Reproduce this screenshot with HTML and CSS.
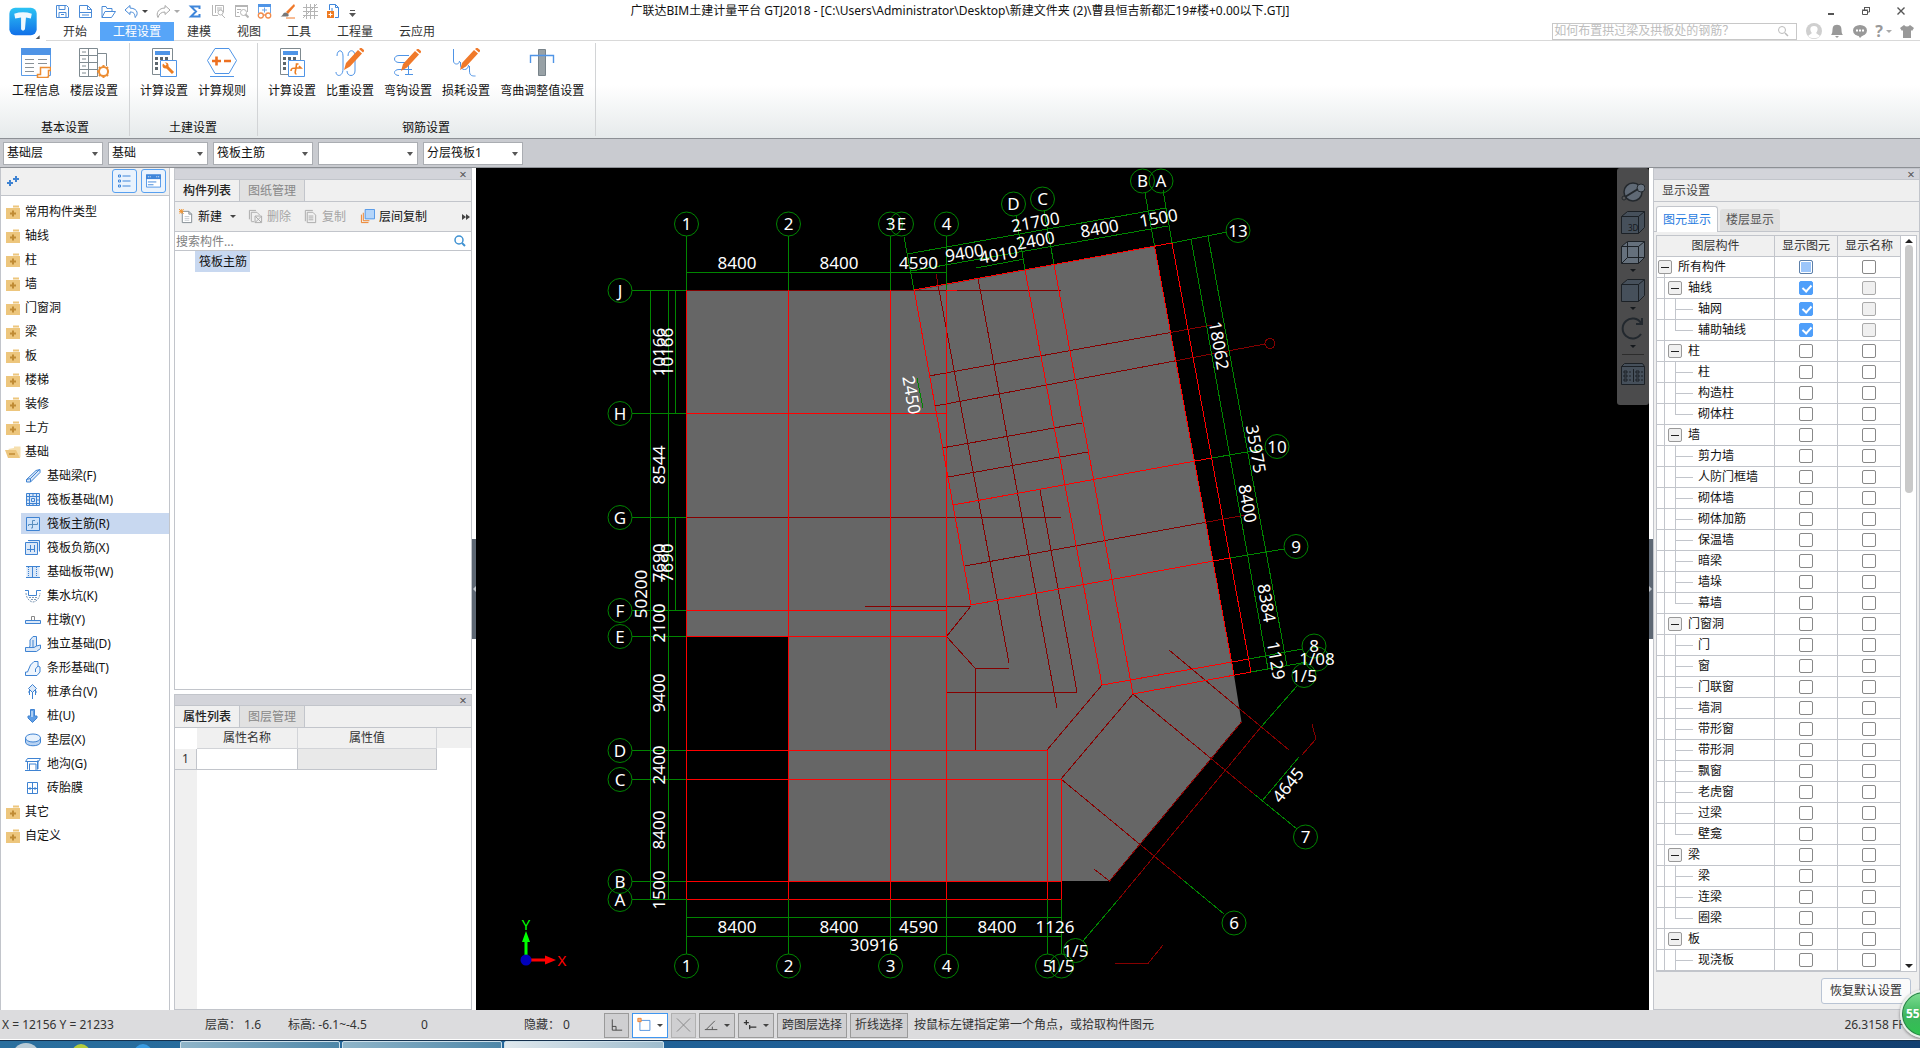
FILE: index.html
```html
<!DOCTYPE html>
<html lang="zh-CN">

<head>
    <meta charset="UTF-8">
    <title>广联达BIM土建计量平台 GTJ2018</title>
    <link rel="stylesheet" href="styles.css">
</head>

<body>

    <!-- icons -->
    <svg class="sprite" xmlns="http://www.w3.org/2000/svg">
        <symbol id="i-save" viewBox="0 0 15 15"><path d="M1.5 1.5h10l2 2v10h-12zM4 1.5v4h6v-4M4 13.500v-5h7v5M6 10.500h3" fill="none" stroke="#4a8bd8" /></symbol>
        <symbol id="i-doc" viewBox="0 0 15 15"><path d="M1.500 13.500v-12h8l4 4v8zM9.500 1.500v4h4M1 8.500h13M4 11h7" fill="none" stroke="#4a8bd8" /></symbol>
        <symbol id="i-open" viewBox="0 0 15 15"><path d="M1 13.500v-11h4l1 2h5v3M1 13.500l3-6h10.500l-4 6z" fill="none" stroke="#4a8bd8" /></symbol>
        <symbol id="i-undo" viewBox="0 0 15 15"><path d="M6 1.500L1 6l5 4.500V8c4 0 5 2 5 5.500 3-2 4-9-5-9.500z" fill="none" stroke="#4a8bd8" /></symbol>
        <symbol id="i-redo" viewBox="0 0 15 15"><path d="M9 1.500L14 6 9 10.500V8c-4 0-6 2-7 5.500C-.5 9 3 4 9 4z" fill="none" stroke="#a8a8a8" /></symbol>
        <symbol id="i-sum" viewBox="0 0 15 15"><path d="M11.500 5V2.500H3L8 7.500l-5 5h8.500V10" fill="none" stroke="#3f86da" stroke-width="2" /></symbol>
        <symbol id="i-steel" viewBox="0 0 15 15"><path d="M1.500 1v10.500H7M4.500 1v8M4.500 1.500h8v7M6 4h5M6 6h5" fill="none" stroke="#b5b5b5" /><circle cx="9.500" cy="8.500" r="2.500" fill="#fff" stroke="#b5b5b5" /><path d="M11 11l3 3" stroke="#b5b5b5" /></symbol>
        <symbol id="i-find" viewBox="0 0 15 15"><path d="M1 1h13v2H1z" fill="#b5b5b5" /><path d="M6 12.500H1.500V2h12v6M3 5.500h4M3 8.500h2" fill="none" stroke="#b5b5b5" /><circle cx="9.500" cy="8.500" r="3" fill="#fff" stroke="#b5b5b5" /><path d="M11.500 10.500l3 3" stroke="#b5b5b5" stroke-width="2" /></symbol>
        <symbol id="i-glass" viewBox="0 0 15 15"><path d="M1 0h13v3H1z" fill="#4f94e6" /><path d="M1.500 3v6M13.500 3v6M5 6h5M7.500 3.500v5" fill="none" stroke="#6ba4e8" /><g fill="none" stroke="#f08a4b" stroke-width="1.300"><circle cx="3.800" cy="11.500" r="2.500" /><circle cx="11.200" cy="11.500" r="2.500" /><path d="M6 11h3" /></g></symbol>
        <symbol id="i-brush" viewBox="0 0 15 15"><path d="M14 0L6 8l2 2 7-8z" fill="#f0792a" /><path d="M5.500 8.500c-3 0-2 3-5 4h7c2-.5 1-2 .5-3z" fill="#777" /><path d="M6 14h9" stroke="#f0792a" /></symbol>
        <symbol id="i-grid" viewBox="0 0 15 15"><path d="M3.500 0v15M7.500 0v15M11.500 0v15M0 3.500h15M0 7.500h15M0 11.500h15M0 14L14 0" fill="none" stroke="#b5b5b5" /></symbol>
        <symbol id="i-export" viewBox="0 0 15 15"><path d="M3.500 6V.5h6l3 3v10H9M9.500.5v3h3M6 4v3" fill="none" stroke="#3f86da" /><path d="M1 7h7v7H1z" fill="#ee7b22" /><path d="M4.500 8.500v4M2.500 10.500h4" stroke="#fff" /></symbol>

        <symbol id="i-info" viewBox="0 0 30 30"><path d="M.5.500h29v27H.5z" fill="#fff" stroke="#5b9ce8" /><path d="M0 0h30v7H0z" fill="#4f94e6" /><path d="M4 11.500h9M4 15.500h9M4 19.500h9M4 23.500h9M17 11.500h9M17 15.500h9" stroke="#8a9298" /><path d="M19.500 19.500h10v3h-2v6q-1 1.500-3 1h-8v-3h3z" fill="#fff" stroke="#ec8d33" stroke-width="1.500" /></symbol>
        <symbol id="i-floor" viewBox="0 0 30 30"><path d="M.5.500h18v28H.5zM.5 7.500h18M.5 14.500h18M.5 21.500h18M9.500.5v28M3 4h4M3 11h4M3 18h4M3 25h4M18.500 5.500h9V18" fill="none" stroke="#7f8a90" /><circle cx="24.500" cy="23.500" r="4.500" fill="#fff" stroke="#ec8d33" stroke-width="2" /><path d="M24.500 17v2M24.500 28v2M18 23.500h2M29 23.500h1M20 19l1.500 1.500M29 19l-1.500 1.500M20 28l1.500-1.500M29 28l-1.500-1.500" stroke="#ec8d33" stroke-width="2" /></symbol>
        <symbol id="i-calc" viewBox="0 0 30 30"><path d="M3.500.5h20v26h-20z" fill="#fff" stroke="#7f8a90" /><path d="M6 3h15v4H6z" fill="#4f94e6" /><path d="M6 9h3v3H6zM11 9h3v3h-3zM16 9h3v3h-3zM6 14h3v3H6zM6 19h3v3H6z" fill="#5c666d" /></symbol>
        <symbol id="i-calcwrench" viewBox="0 0 30 30"><use href="#i-calc" /><path d="M11.500 12.500h16v16h-16z" fill="#fff" stroke="#4f94e6" /><path d="M16 17l8 8" stroke="#ec7d22" stroke-width="3" /><circle cx="16.500" cy="17.500" r="3" fill="#ec7d22" /><path d="M14 14l3 3" stroke="#fff" stroke-width="2" /></symbol>
        <symbol id="i-calcbar" viewBox="0 0 30 30"><use href="#i-calc" /><path d="M11.500 12.500h16v16h-16z" fill="#fff" stroke="#4f94e6" /><path d="M14 23c0-3 2-3 5-3h5l-2-2M19.500 26c-3 0 0-5 0-10l2 0" fill="none" stroke="#ec7d22" stroke-width="1.600" /></symbol>
        <symbol id="i-rule" viewBox="0 0 30 30"><path d="M8 .5h14l7.500 12L22 25.500H8L.5 12.500zM3 28.500h24" fill="none" stroke="#4f94e6" /><path d="M5 13h9M9.500 8.500v9M17 13h7" stroke="#ec7021" stroke-width="2.600" /></symbol>
        <symbol id="i-pencil" viewBox="0 0 20 22"><path d="M0 22l2-7L14 2l4 3.500L6 18.500zM15 1l2-1.500 3.500 3L19 4.500z" fill="#f0792a" /></symbol>
        <symbol id="i-weight" viewBox="0 0 30 30"><path d="M2 8c0-7 6-7 6 0v13c0 8-7 8-7 3M13 8c0-7 7-7 7 0M12 23c0 6 8 6 8 0V12" fill="none" stroke="#4f94e6" /><use href="#i-pencil" x="9" y="0" width="20" height="22" /></symbol>
        <symbol id="i-hook" viewBox="0 0 30 30"><path d="M16 7.500H6c-6 0-6 7 0 7h6M14 21.500H6c-6 0-6 6 0 6M9 21.500h10M15.500 10v17M12 26.500h8" fill="none" stroke="#4f94e6" /><use href="#i-pencil" x="8" y="1" width="20" height="22" /></symbol>
        <symbol id="i-loss" viewBox="0 0 30 30"><path d="M2.500 1v12c0 4 6 4 6 0M9.500 14v3c0 6 8 6 8 0M18.500 18v5c0 5 3 5 6 5" fill="none" stroke="#4f94e6" /><use href="#i-pencil" x="9" y="0" width="20" height="22" /></symbol>
        <symbol id="i-bend" viewBox="0 0 30 30"><path d="M11.500 1.500h7v26h-7z" fill="#98a1a6" stroke="#78838a" /><path d="M3.500 15V7.500h23V15" fill="none" stroke="#4f94e6" stroke-width="1.400" /></symbol>

        <symbol id="i-folder" viewBox="0 0 16 16"><path d="M8 1.500h6v2H8zM1 4h14v11H1z" fill="#edc67d" /><path d="M5 9.500h6M8 6.500v6" stroke="#c08b35" stroke-width="2" /></symbol>
        <symbol id="i-folderopen" viewBox="0 0 16 16"><path d="M3 5l6-1V2.500h6.500v10L15 14z" fill="#f6dfae" /><path d="M0 6h11l4 8H3z" fill="#edc67d" /><path d="M4 10h6" stroke="#c08b35" stroke-width="1.500" /></symbol>
        <symbol id="i-f1" viewBox="0 0 16 16"><path d="M1.500 11.500L11 2.500l4-1v3L5.500 14h-4zM1.500 11.500l4-1v3.500M5.500 10.500L14 2" fill="#dbe8f8" stroke="#3f83d2" /></symbol>
        <symbol id="i-f2" viewBox="0 0 16 16"><path d="M1.500 1.500h13v12h-13zM1 4.500h14M1 11.500h14M4.500 1v13M11.500 1v13M6.500 6.500h3v3h-3zM8 1v3M8 12v2M1 8h3M12 8h3" fill="#dbe8f8" stroke="#3f83d2" /></symbol>
        <symbol id="i-f3" viewBox="0 0 16 16"><path d="M1.500 1.500h13v13h-13z" fill="#cfe3fa" stroke="#3f83d2" /><path d="M10 4.500H7.500V12H6M3.500 10V8.500h9V6.500" fill="none" stroke="#5a8fbe" /></symbol>
        <symbol id="i-f4" viewBox="0 0 16 16"><path d="M.5 2.500h12v12H.5zM3 .5h11.500v11" fill="#dbe8f8" stroke="#3f83d2" /><path d="M5.500 5v7M9.500 5v7M2 9.500h8" stroke="#3f83d2" /></symbol>
        <symbol id="i-f5" viewBox="0 0 16 16"><path d="M1.500 3h13v10h-13z" fill="#dbe8f8" /><path d="M1 2.500h14M1 13.500h14M7.500 3v10" stroke="#3f83d2" /><path d="M11.500 3v10M3.500 3v10" stroke="#3f83d2" stroke-dasharray="1 1" /></symbol>
        <symbol id="i-f6" viewBox="0 0 16 16"><path d="M0 2.500h3.500v5h8v-5H16" fill="none" stroke="#3f83d2" /><path d="M1 5c0 5 4 9 7 9s7-4 7-9M4 9.500h9M6 11.500h5" fill="none" stroke="#7d98b5" stroke-dasharray="2 1" /></symbol>
        <symbol id="i-f7" viewBox="0 0 16 16"><path d="M.5 8.500h15v3H.5z" fill="#dbe8f8" stroke="#3f83d2" /><path d="M6.500 8V4.500h3V8" fill="none" stroke="#888" /></symbol>
        <symbol id="i-f8" viewBox="0 0 16 16"><path d="M.5 15.500v-4h3l1.500-1V4l3-3.500h3.500V10l4-1v3.500l-4 3zM11.500 10L9 11.500H3.500M8 4v7" fill="#dbe8f8" stroke="#3f83d2" /></symbol>
        <symbol id="i-f9" viewBox="0 0 16 16"><path d="M.5 15.500v-3.500h2l3-7L9 1.500h4V6l2 1v5l-3 3.500zM13 6l-2.500 3v3" fill="#eef5fd" stroke="#3f83d2" /></symbol>
        <symbol id="i-f10" viewBox="0 0 16 16"><path d="M7.500.5l4 4-4 4-4-4z" fill="#dbe8f8" stroke="#3f83d2" /><path d="M7.500 8v7M4.500 6v5M10.500 6v5M3 8h2M10 8h2" stroke="#3f83d2" /></symbol>
        <symbol id="i-f11" viewBox="0 0 16 16"><path d="M5.500 1.500h4V8h2.500v2l-4.500 4.500L3 10V8h2.500z" fill="#5f9de4" stroke="#3f83d2" /><path d="M7 3v6" stroke="#fff" /></symbol>
        <symbol id="i-f12" viewBox="0 0 16 16"><path d="M.5 6v4c0 5 15 5 15 0V6" fill="#b9d3f2" stroke="#3f83d2" /><ellipse cx="8" cy="6" rx="7.500" ry="4" fill="#e8f2fd" stroke="#3f83d2" /></symbol>
        <symbol id="i-f13" viewBox="0 0 16 16"><path d="M.5 5.500l2-3h13l-2 3zM2.500 5.500v8M12.500 5.500v8M0 14.500h16M4.500 8v6M11 8v6M4 8h7M13 4v9" fill="none" stroke="#3f83d2" /></symbol>
        <symbol id="i-f14" viewBox="0 0 16 16"><path d="M2.500 2.500h10v11h-10zM7.500 2v12M2 8.500h11M5 7v3M10 7v3" fill="#fff" stroke="#3f83d2" /></symbol>
    </svg>

    <header class="top">
        <button class="logo" aria-label="菜单">
            <svg viewBox="0 0 40 42">
                <defs>
                    <linearGradient id="logo-bg" x2="0" y2="1">
                        <stop offset="0" stop-color="#2cc3f4" />
                        <stop offset="1" stop-color="#1170e8" />
                    </linearGradient>
                </defs>
                <rect x="5" y="8" width="28" height="28" rx="6" fill="url(#logo-bg)" />
                <path d="M10 14q9-3 18 0l-1 5-5-1-1 12q-2 3-4 0V18l-6 1z" fill="#eef8fe" />
                <path d="M36 36v4h-4z" fill="#555" />
            </svg>
        </button>
        <div class="quick">
            <button aria-label="保存"><svg><use href="#i-save" /></svg></button>
            <button aria-label="新建"><svg><use href="#i-doc" /></svg></button>
            <button aria-label="打开"><svg><use href="#i-open" /></svg></button>
            <button class="wide" aria-label="撤销"><svg><use href="#i-undo" /></svg><i class="caret"></i></button>
            <button class="wide" aria-label="恢复"><svg><use href="#i-redo" /></svg><i class="caret pale"></i></button>
            <button aria-label="汇总计算"><svg><use href="#i-sum" /></svg></button>
            <button aria-label="钢筋量"><svg><use href="#i-steel" /></svg></button>
            <button aria-label="查找"><svg><use href="#i-find" /></svg></button>
            <button aria-label="查看"><svg><use href="#i-glass" /></svg></button>
            <button aria-label="格式刷"><svg><use href="#i-brush" /></svg></button>
            <button aria-label="轴网"><svg><use href="#i-grid" /></svg></button>
            <button aria-label="导出"><svg><use href="#i-export" /></svg></button>
            <button aria-label="更多"><svg viewBox="0 0 15 15"><path d="M1 6.500h5" stroke="#555" /><path d="M0 9h7l-3.500 4z" fill="#555" /></svg></button>
        </div>
        <h1 class="title">广联达BIM土建计量平台 GTJ2018 - [C:\Users\Administrator\Desktop\新建文件夹 (2)\曹县恒吉新都汇19#楼+0.00以下.GTJ]</h1>
        <div class="window-buttons">
            <button aria-label="最小化"><svg viewBox="0 0 10 10"><path d="M2 8h6" stroke="#555" stroke-width="2" /></svg></button>
            <button aria-label="还原"><svg viewBox="0 0 10 10"><path d="M1.500 4.500h5v4h-5zM3.500 4V1.500h5v4.500H7M1 4h6M3 1.500h6" fill="none" stroke="#555" /></svg></button>
            <button aria-label="关闭"><svg viewBox="0 0 10 10"><path d="M1.500 1.500l7 7M8.500 1.500l-7 7" stroke="#555" stroke-width="1.400" /></svg></button>
        </div>
        <nav class="tabs">
            <button>开始</button>
            <button class="active">工程设置</button>
            <button>建模</button>
            <button>视图</button>
            <button>工具</button>
            <button>工程量</button>
            <button>云应用</button>
        </nav>
        <div class="tools">
            <label class="help-search">
                <input type="text" placeholder="如何布置拱过梁及拱板处的钢筋？" aria-label="帮助搜索">
                <svg viewBox="0 0 12 12"><circle cx="5" cy="5" r="3.500" fill="none" stroke="#bbb" /><path d="M8 8l3 3" stroke="#bbb" stroke-width="1.500" /></svg>
            </label>
            <button aria-label="用户"><svg viewBox="0 0 16 16"><circle cx="8" cy="8" r="8" fill="#cfcfcf" /><path d="M8 3c5 0 4 5 2 7l4 3c-3 3-9 3-12 0l4-3C4 8 3 3 8 3z" fill="#fff" /></svg></button>
            <button aria-label="通知"><svg viewBox="0 0 16 16"><path d="M2 12c2-2 1-5 2-8 1-3 7-3 8 0 1 3 0 6 2 8zM6 13h4l-2 2z" fill="#999" /></svg></button>
            <button aria-label="消息"><svg viewBox="0 0 16 16"><ellipse cx="8" cy="7.500" rx="7" ry="5.500" fill="#999" /><path d="M6 12l2 3 3-3z" fill="#999" /><path d="M4 7.500h2M7 7.500h2M10 7.500h2" stroke="#fff" stroke-width="2" /></svg></button>
            <button class="help" aria-label="帮助">?<i class="caret pale"></i></button>
            <button aria-label="皮肤"><svg viewBox="0 0 16 16"><path d="M5 2q3 3 6 0l4 3-2 3-1-1v8H4V7L3 8 1 5z" fill="#999" /></svg></button>
        </div>
    </header>

    <section class="ribbon">
        <div class="group">
            <div class="commands">
                <button><svg><use href="#i-info" /></svg>工程信息</button>
                <button><svg><use href="#i-floor" /></svg>楼层设置</button>
            </div>
            <h2>基本设置</h2>
        </div>
        <div class="group">
            <div class="commands">
                <button><svg><use href="#i-calcwrench" /></svg>计算设置</button>
                <button><svg><use href="#i-rule" /></svg>计算规则</button>
            </div>
            <h2>土建设置</h2>
        </div>
        <div class="group">
            <div class="commands">
                <button><svg><use href="#i-calcbar" /></svg>计算设置</button>
                <button><svg><use href="#i-weight" /></svg>比重设置</button>
                <button><svg><use href="#i-hook" /></svg>弯钩设置</button>
                <button><svg><use href="#i-loss" /></svg>损耗设置</button>
                <button><svg><use href="#i-bend" /></svg>弯曲调整值设置</button>
            </div>
            <h2>钢筋设置</h2>
        </div>
    </section>

    <section class="filters">
        <label><select aria-label="楼层"><option>基础层</option></select></label>
        <label><select aria-label="构件类型"><option>基础</option></select></label>
        <label><select aria-label="构件"><option>筏板主筋</option></select></label>
        <label><select aria-label="名称"><option></option></select></label>
        <label><select aria-label="分层"><option>分层筏板1</option></select></label>
    </section>

    <main>
        <aside class="categories">
            <div class="categories-head">
                <svg class="plus" viewBox="0 0 12 12"><path d="M0 8h6M3 5v6M6 4h6M9 1v6" stroke="#3f83d2" stroke-width="2" /></svg>
                <button aria-label="列表"><svg viewBox="0 0 14 14"><path d="M1 1h2v2H1zM1 6h2v2H1zM1 11h2v2H1zM5 2h8M5 7h8M5 12h8" fill="none" stroke="#3f86da" /></svg></button>
                <button aria-label="卡片"><svg viewBox="0 0 16 14"><path d="M.5.500h15v13H.5z" fill="#fff" stroke="#4f94e6" /><path d="M0 0h16v5H0z" fill="#3f86da" /><path d="M2 8h9M2 11h6" stroke="#3f86da" /><path d="M2 2.500h4M11 2.500h3" stroke="#fff" stroke-dasharray="1 1" /></svg></button>
            </div>
            <ul class="category-list"></ul>
        </aside>

        <div class="middle">
            <section class="panel components">
                <div class="panel-bar"><button aria-label="关闭">×</button></div>
                <div class="panel-tabs">
                    <button class="active">构件列表</button>
                    <button>图纸管理</button>
                </div>
                <div class="toolbar">
                    <button><svg viewBox="0 0 16 16"><path d="M3.500 2.500h7l3 3v9h-10zM10.500 2.500v3h3" fill="#fff" stroke="#808a90" /><path d="M6 8h5M6 10h5M6 12h5" stroke="#c5cbd0" /><path d="M0 0l5 5M5 0L0 5M2.500 0v5M0 2.500h5" stroke="#f0922e" /></svg>新建<i class="caret"></i></button>
                    <button class="off"><svg viewBox="0 0 16 16"><path d="M1.500 11V1.500h7M3.500 13V3.500h6l3 3M3.500 13.500h3" fill="none" stroke="#aaa" /><path d="M7.500 7.500h7v7h-7zM8 8l6 6M14 8l-6 6" fill="none" stroke="#aaa" /></svg>删除</button>
                    <button class="off"><svg viewBox="0 0 16 16"><path d="M2.500 13V1.500h8M4.500 3.500h6l3 3v8h-9zM6 7.500h5M6 9.500h5M6 11.500h5" fill="none" stroke="#aaa" /></svg>复制</button>
                    <button><svg viewBox="0 0 16 16"><path d="M1.500 6v8.500H9M3.500 4v8.500H10" fill="none" stroke="#ec7d22" /><path d="M5.500.500h10v10h-10z" fill="#b4d5fa" stroke="#4f94e6" /></svg>层间复制</button>
                    <button class="overflow" aria-label="更多"><svg viewBox="0 0 8 6"><path d="M0 0l4 3-4 3zM4 0l4 3-4 3z" fill="#444" /></svg></button>
                </div>
                <label class="search">
                    <input type="text" placeholder="搜索构件..." aria-label="搜索构件">
                    <svg viewBox="0 0 12 12"><circle cx="5" cy="5" r="4" fill="none" stroke="#3f92d2" stroke-width="1.500" /><path d="M8 8l3 3" stroke="#3f92d2" stroke-width="2" /></svg>
                </label>
                <ul class="component-list">
                    <li><button>筏板主筋</button></li>
                </ul>
            </section>

            <section class="panel properties">
                <div class="panel-bar"><button aria-label="关闭">×</button></div>
                <div class="panel-tabs">
                    <button class="active">属性列表</button>
                    <button>图层管理</button>
                </div>
                <div class="property-body">
                    <table>
                        <thead>
                            <tr><td class="corner"></td><th>属性名称</th><th>属性值</th></tr>
                        </thead>
                        <tbody>
                            <tr><th>1</th><td></td><td class="value"></td></tr>
                        </tbody>
                    </table>
                </div>
            </section>
        </div>

        <div class="splitter"><button aria-label="收起左侧"><svg viewBox="0 0 4 8"><path d="M4 1v6L1 4z" fill="#c3c8ce" /></svg></button></div>

        <section class="canvas">
            <svg class="drawing" viewBox="476 168 1173 842" preserveAspectRatio="xMidYMid meet">
                <path class="slab" d="M686.500 290.500H914L1154.500 246L1234 675L1241.500 722L1109.500 881H788.500V636.500H686.500Z" />

                <!-- auxiliary axes -->
                <path class="aux" d="M686 290.500H1061M686 517.500H1061M865 606.500H970M946 692.500H1077M975 668.500H1009M975.500 668V750M971 606L946.500 636.500L975 668
                    M929 376L1212 325M935 406L1265 344M942 448L1082 423M948 477L1088 452M965 566L1246 515
                    M936 274L1009 663M978 278L1057 708M1040 490L1077 692
                    M1047 750L1102 685M1061 779L1133 694L1254 794M1061 779L1183 880M1169 650L1289 750
                    M1241.500 722L1109.500 881L1094 869M1261 727L1118 900M1312 724L1316 739L1302 755M1115 963.500H1148L1163 945" />
                <circle class="aux" cx="1270" cy="343.500" r="5" />

                <!-- main axes -->
                <path class="axis" d="M686.500 290V899M788.500 290V899M890.500 290V899M946.500 290V899M1047.500 750V899M1061.500 779V899
                    M686 413.500H946M686 610.500H946M686 636.500H946M686 750.500H1047M686 779.500H1061M686 881.500H1061M686 899.500H1061M946 290.500H957
                    M914 289L971 605M1025 270L1102 685M1054 264L1133 694M1154.500 246L1234 675M1172 243L1251 672
                    M914 290L1172 243M953 505L1212 458M971 605L1230 558M1102 685L1249 659M1133 694L1251 672" />

                <!-- dimension lines and leaders -->
                <path class="dim" d="M686.500 236V290M788.500 236V290M890.500 236V290M946.500 236V290M686 272.500H946
                    M632 290.500H686M632 413.500H686M632 517.500H686M632 610.500H686M632 636.500H686M632 750.500H686M632 779.500H686M632 881.500H686M632 899.500H686
                    M650.500 290V899M668.500 290V899M675.500 290V413M675.500 517V610
                    M686.500 899V954M788.500 899V954M890.500 899V954M946.500 899V954M1047.500 899V954M1061.500 899V954M686 917.500H1062M686 936.500H1062
                    M904 237L914 290M1016 216L1025 270M1044 211L1054 264M1145 193L1154.500 246M1163 190L1172 243
                    M907 254L1166 208M911 271L1168 226M976 268L1024 259
                    M1172 243L1227 232M1212 458L1264 449M1230 558L1284 549M1249 659L1302 649M1251 672L1307 662
                    M1191 239L1268 669M1208 236L1287 666M917 378L923 408
                    M1297 686L1261 727M1118 900L1083 941M1254 794L1297 829M1183 880L1224 914M1299 757L1262 801" />
                <g class="bubbles"></g>
                <g class="labels"></g>

                <!-- coordinate arrows -->
                <path d="M524.500 960V942h-2.500l4-11 4 11h-2.500v18z" fill="#0f0" />
                <path d="M526 958.500h19v-3l11 4.500-11 4.500v-3h-19z" fill="#f00" />
                <circle cx="526" cy="960" r="5.500" fill="#00b" />
                <text class="axis-y" x="526" y="930">Y</text>
                <text class="axis-x" x="562" y="966">X</text>
            </svg>
            <div class="view-tools">
                <button aria-label="动态观察"><svg viewBox="0 0 24 24"><circle cx="12" cy="12" r="9" fill="#5f6975" stroke="#23282d" stroke-width="1.500" /><circle cx="20" cy="8" r="4" fill="#6b7682" stroke="#23282d" /><circle cx="3" cy="18" r="2" fill="#555" stroke="#23282d" /><path d="M4 17L17 9" stroke="#23282d" stroke-width="2" /></svg></button>
                <button aria-label="三维"><svg viewBox="0 0 24 24"><path d="M.5 6.500h17v17H.5zM.5 6.500l6-5h17v16l-6 6M17.500 6.500l6-5" fill="#46505b" stroke="#1c2126" /><text x="7" y="21">3D</text></svg></button>
                <button aria-label="俯视"><svg viewBox="0 0 24 24"><path d="M.5 6.500l6-5h17v16l-6 6H.5z" fill="#65707c" stroke="#1c2126" /><path d="M.5 6.500h17v17M17.500 6.500l6-5M6.500 2v15.500h17M.5 23.500l6-6" fill="none" stroke="#1c2126" /></svg><i class="caret"></i></button>
                <button aria-label="实体"><svg viewBox="0 0 24 24"><path d="M.5 6.500h17v17H.5zM.5 6.500l6-5h17v16l-6 6M17.500 6.500l6-5" fill="#46505b" stroke="#1c2126" /></svg><i class="caret"></i></button>
                <button aria-label="旋转"><svg viewBox="0 0 24 24"><path d="M20 18a10 10 0 1 1 0-11M15 8h6V2" fill="none" stroke="#22282e" stroke-width="2" /></svg><i class="caret"></i></button>
                <hr>
                <button aria-label="显示设置"><svg viewBox="0 0 24 24"><path d="M.5 5.500h23v18H.5zM.5 5.500l3-3h18l2 3" fill="#46505b" stroke="#1c2126" /><path d="M3 10h3v2H3zM3 14h3v2H3zM3 18h3v2H3zM15 10h3v2h-3zM15 14h3v2h-3zM15 18h3v2h-3zM8 11h2M8 15h2M8 19h2M20 11h2M20 15h2M20 19h2M12.500 8v13" fill="none" stroke="#1c2126" /></svg></button>
            </div>
        </section>

        <div class="splitter"><button aria-label="收起右侧"><svg viewBox="0 0 4 8"><path d="M0 1v6l3-3z" fill="#c3c8ce" /></svg></button></div>

        <aside class="panel display">
            <div class="panel-bar"><button aria-label="关闭">×</button></div>
            <h2>显示设置</h2>
            <div class="display-tabs">
                <button class="active">图元显示</button>
                <button>楼层显示</button>
            </div>
            <div class="layer-box">
                <table class="layers">
                    <thead>
                        <tr><th>图层构件</th><th class="check">显示图元</th><th class="check">显示名称</th></tr>
                    </thead>
                    <tbody></tbody>
                </table>
                <div class="scroll"><i class="up"></i><span></span><i class="down"></i></div>
            </div>
            <div class="display-foot"><button>恢复默认设置</button></div>
        </aside>
    </main>

    <footer class="status">
        <span class="coords">X = 12156 Y = 21233</span>
        <span class="height">层高： 1.6</span>
        <span class="level">标高: -6.1~-4.5</span>
        <span class="count">0</span>
        <span class="hidden-count">隐藏： 0</span>
        <div class="modes">
            <button aria-label="正交"><svg viewBox="0 0 16 16"><path d="M3.500 2v11.500H14M3.500 9.500h4v4" fill="none" stroke="#444" /></svg></button>
            <button class="on" aria-label="矩形"><svg viewBox="0 0 18 16"><path d="M3.500 2.500h12v12h-12z" fill="none" stroke="#3f86da" /><path d="M1 0h4v4H1z" fill="#f9b58c" stroke="#ec7d22" /></svg><i class="caret"></i></button>
            <button aria-label="交点"><svg viewBox="0 0 16 16"><path d="M1 1l14 14M15 1L1 15" stroke="#888" /></svg></button>
            <button aria-label="角度"><svg viewBox="0 0 18 16"><path d="M1 13.500h15M3 13L13 3M10 10v3" fill="none" stroke="#444" /></svg><i class="caret"></i></button>
            <button aria-label="偏移"><svg viewBox="0 0 18 16"><path d="M1 5h6M4 2v6M8 10.500h8M8 8v5" fill="none" stroke="#333" stroke-width="1.500" /></svg><i class="caret"></i></button>
            <button>跨图层选择</button>
            <button>折线选择</button>
        </div>
        <span class="hint">按鼠标左键指定第一个角点，或拾取构件图元</span>
        <span class="fps">26.3158 FPS</span>
        <div class="ball">55</div>
    </footer>

    <div class="taskbar">
        <span class="orb"></span>
        <span class="pin green"></span>
        <span class="pin blue"></span>
        <span class="task"></span>
        <span class="task"></span>
        <span class="task light"></span>
    </div>

    <script src="script.js"></script>
</body>

</html>
```

FILE: styles.css
```css
* {
    box-sizing: border-box;
}

body {
    margin: 0;
    height: 100vh;
    display: flex;
    flex-direction: column;
    overflow: hidden;
    background: #fff;
    color: #111;
    font: 12px/16px "Noto Sans", "Noto Sans CJK SC", sans-serif;
}

button,
input,
select {
    font: inherit;
    color: inherit;
}

button {
    border: 0;
    padding: 0;
    background: none;
}

h1,
h2 {
    margin: 0;
    font-size: 12px;
    font-weight: normal;
}

ul {
    list-style: none;
    margin: 0;
    padding: 0;
}

.sprite {
    display: none;
}

.caret {
    display: inline-block;
    border: 3px solid transparent;
    border-top-color: #444;
    border-bottom: 0;
}

.caret.pale {
    border-top-color: #aaa;
}

/* title, quick access and tabs */
.top {
    display: grid;
    grid-template-columns: 46px 1fr auto 1fr 46px;
    grid-template-rows: 22px 19px;
    grid-template-areas:
        "logo quick title win win"
        "logo tabs tools tools tools";
}

.logo {
    grid-area: logo;
}

.logo svg {
    display: block;
    width: 40px;
    height: 41px;
    margin-left: 4px;
}

.quick {
    grid-area: quick;
    display: flex;
    align-items: center;
    gap: 8px;
    padding-left: 9px;
}

.quick button {
    display: flex;
    align-items: center;
    justify-content: space-between;
    width: 15px;
}

.quick svg {
    width: 15px;
    height: 15px;
    flex: none;
}

.quick .wide {
    width: 24px;
}

.title {
    grid-area: title;
    line-height: 22px;
    white-space: nowrap;
}

.window-buttons {
    grid-area: win;
    display: flex;
    justify-content: flex-end;
    align-items: center;
    gap: 25px;
    padding-right: 14px;
}

.window-buttons svg {
    display: block;
    width: 10px;
    height: 10px;
}

.tabs {
    grid-area: tabs;
    display: flex;
    padding-left: 4px;
    border-bottom: 1px solid #d9d9d9;
}

.tabs button {
    padding: 0 13px;
    height: 19px;
    color: #333;
    white-space: nowrap;
}

.tabs .active {
    background: #57a5f8;
    color: #fff;
}

.tools {
    grid-area: tools;
    display: flex;
    justify-content: flex-end;
    align-items: center;
    gap: 7px;
    padding-right: 5px;
    border-bottom: 1px solid #d9d9d9;
}

.tools button svg {
    display: block;
    width: 16px;
    height: 16px;
}

.tools .help {
    display: flex;
    align-items: center;
    gap: 3px;
    color: #999;
    font-size: 16px;
    font-weight: bold;
}

.help-search {
    display: flex;
    align-items: center;
    width: 245px;
    height: 17px;
    margin-right: 2px;
    padding-right: 7px;
    border: 1px solid #c8c8c8;
}

.help-search input {
    flex: 1;
    border: 0;
    padding: 0 1px;
    height: 15px;
    min-width: 0;
    background: none;
}

.help-search input::placeholder {
    color: #bdbdbd;
}

.help-search svg {
    width: 12px;
    height: 12px;
}

/* ribbon */
.ribbon {
    display: flex;
    height: 98px;
    padding: 2px;
    border-bottom: 1px solid #8d9095;
    background: linear-gradient(#fff 45%, #e6eaeb);
}

.group {
    display: flex;
    flex-direction: column;
    padding: 5px 6px 0 5px;
    border-right: 1px solid #d2d4d6;
}

.group h2 {
    margin-top: auto;
    text-align: center;
}

.commands {
    display: flex;
}

.commands button {
    display: flex;
    flex-direction: column;
    align-items: center;
    gap: 5px;
    padding: 0 5px;
}

.commands svg {
    width: 30px;
    height: 30px;
}

.filters {
    display: flex;
    align-items: center;
    gap: 5px;
    height: 29px;
    padding: 0 3px;
    border-bottom: 1px solid #8d9095;
    background: #c9cbd0;
}

.filters label {
    position: relative;
}

.filters label::after {
    content: "";
    position: absolute;
    top: 10px;
    right: 5px;
    border: 3px solid transparent;
    border-top: 4px solid #555;
    border-bottom: 0;
}

.filters select {
    display: block;
    width: 100px;
    height: 23px;
    padding: 0 3px;
    appearance: none;
    border: 1px solid #aaadb2;
    border-radius: 0;
    background: #fff;
}

/* work area */
main {
    flex: 1;
    min-height: 0;
    display: grid;
    grid-template-columns: 170px 302px 4px minmax(0, 1fr) 4px 267px;
    grid-template-rows: minmax(0, 1fr);
    background: #fff;
}

.categories {
    border: solid #c2c5cb;
    border-width: 0 1px;
}

.categories-head {
    display: flex;
    align-items: center;
    gap: 4px;
    height: 28px;
    padding: 0 3px 2px 6px;
    background: #f0f0f0;
    border-bottom: 1px solid #c2c5cb;
}

.categories-head .plus {
    width: 12px;
    height: 12px;
    margin-right: auto;
}

.categories-head button {
    display: grid;
    place-items: center;
    width: 25px;
    height: 24px;
    border: 1px solid #57a0f0;
    border-radius: 3px;
    background: #eaf3fd;
}

.categories-head button svg {
    width: 15px;
    height: 14px;
}

.category-list {
    padding-top: 4px;
}

.category-list li {
    height: 24px;
    padding: 1px 0 2px;
}

.category-list button {
    display: flex;
    align-items: center;
    gap: 4px;
    width: 100%;
    height: 21px;
    padding-left: 4px;
}

.category-list svg {
    width: 16px;
    height: 16px;
}

.category-list .child {
    padding-left: 20px;
}

.category-list .child button {
    gap: 6px;
}

.category-list .selected {
    background: #c8d8f0;
}

.middle {
    display: grid;
    grid-template-rows: 522px minmax(0, 1fr);
    gap: 4px;
    min-height: 0;
    padding-left: 4px;
}

.panel {
    display: flex;
    flex-direction: column;
    min-height: 0;
    border: 1px solid #c2c5cb;
    background: #fff;
}

.panel-bar {
    display: flex;
    justify-content: flex-end;
    height: 11px;
    flex: none;
    background: #d3d4da;
    border-bottom: 1px solid #c2c5cb;
}

.panel-bar button {
    width: 16px;
    font-size: 13px;
    line-height: 9px;
    color: #555;
}

.panel-tabs {
    display: flex;
    height: 22px;
    flex: none;
    background: #f0f0f0;
    border-bottom: 1px solid #c2c5cb;
}

.panel-tabs button {
    width: 65px;
    border-right: 1px solid #c2c5cb;
    background: #e1e1e1;
    color: #888;
}

.panel-tabs .active {
    background: #f0f0f0;
    color: #222;
    font-weight: 500;
}

.toolbar {
    display: flex;
    align-items: center;
    height: 30px;
    padding-left: 4px;
    background: #f0f0f0;
    border-bottom: 1px solid #c2c5cb;
}

.toolbar button {
    display: flex;
    align-items: center;
    gap: 4px;
    margin-right: 12px;
    white-space: nowrap;
}

.toolbar svg {
    width: 15px;
    height: 15px;
}

.toolbar .caret {
    margin-left: 4px;
}

.toolbar .off {
    color: #a5a5a5;
}

.toolbar .off + .off {
    margin-right: 14px;
}

.toolbar .overflow {
    margin: 0 1px 0 auto;
}

.toolbar .overflow svg {
    width: 8px;
    height: 6px;
}

.search {
    display: flex;
    align-items: center;
    height: 19px;
    padding-right: 5px;
    border-bottom: 1px solid #c2c5cb;
}

.search input {
    flex: 1;
    border: 0;
    padding: 0 1px;
    height: 18px;
}

.search input::placeholder {
    color: #808080;
}

.search svg {
    width: 12px;
    height: 12px;
}

.component-list button {
    height: 21px;
    margin-left: 20px;
    padding: 0 3px 0 4px;
    background: #c8d8f0;
}

.property-body {
    flex: 1;
    background:
        linear-gradient(#f0f0f0, #f0f0f0) 100% 0 / 34px 20px no-repeat,
        linear-gradient(90deg, #f0f0f0 22px, #fff 22px);
}

.property-body table {
    width: 262px;
    border-collapse: separate;
    border-spacing: 0;
    table-layout: fixed;
}

.property-body td,
.property-body th {
    height: 21px;
    padding: 0;
    border: solid #c2c5cb;
    border-width: 0 1px 1px 0;
    font-weight: normal;
    color: #333;
}

.property-body td {
    background: #fff;
}

.property-body thead th {
    border-color: #d2d4d8;
    background: #f0f0f0;
}

.property-body .corner {
    width: 22px;
    border: 0;
}

.property-body thead th:nth-child(2) {
    width: 101px;
}

.property-body tbody .value {
    background: #e9e9e9;
}

.splitter {
    display: flex;
    align-items: center;
}

.splitter button {
    width: 4px;
    height: 100px;
    background: #5d6773;
}

.splitter svg {
    display: block;
    width: 4px;
    height: 8px;
}

/* drawing */
.canvas {
    position: relative;
    background: #000;
}

.drawing {
    display: block;
    width: 100%;
    height: 100%;
}

.drawing .slab {
    fill: #666;
}

.drawing .aux,
.drawing .axis,
.drawing .dim {
    fill: none;
    shape-rendering: crispEdges;
}

.drawing .aux {
    stroke: #850000;
}

.drawing .axis {
    stroke: #f00;
}

.drawing .dim,
.bubbles {
    stroke: #008500;
    fill: none;
}

.drawing text {
    font-size: 17px;
    fill: #fff;
    text-anchor: middle;
}

.drawing .axis-x {
    fill: #f00;
    font-size: 15px;
}

.drawing .axis-y {
    fill: #0f0;
    font-size: 15px;
}

.view-tools {
    position: absolute;
    top: 0;
    right: 0;
    display: flex;
    flex-direction: column;
    align-items: center;
    gap: 6px;
    width: 32px;
    padding: 12px 0 20px;
    border-radius: 3px;
    background: #4b4b4c;
}

.view-tools button {
    display: flex;
    flex-direction: column;
    align-items: center;
    gap: 5px;
}

.view-tools button svg {
    width: 24px;
    height: 24px;
}

.view-tools text {
    font-size: 8px;
    fill: #15191d;
}

.view-tools .caret {
    border-top-color: #15191d;
}

.view-tools hr {
    width: 22px;
    margin: 0;
    border: 0;
    border-top: 1px solid #2c2c2c;
}

/* display settings */
.display {
    background: #efefef;
}

.display h2 {
    height: 22px;
    flex: none;
    padding-left: 8px;
    line-height: 21px;
    color: #444;
    border-bottom: 1px solid #c2c5cb;
}

.display-tabs {
    display: flex;
    align-items: flex-end;
    gap: 2px;
    height: 30px;
    flex: none;
    padding-left: 2px;
    border-bottom: 1px solid #c2c5cb;
}

.display-tabs button {
    width: 60px;
    height: 22px;
    border-radius: 3px 3px 0 0;
    background: #e0e0e0;
    color: #555;
}

.display-tabs .active {
    width: 62px;
    height: 26px;
    margin-bottom: -1px;
    border: 1px solid #c2c5cb;
    border-bottom: 0;
    background: #fff;
    color: #1f7be0;
}

.layer-box {
    display: flex;
    margin: 3px 2px 0;
    border: 1px solid #c2c5cb;
    background: #fff;
}

.layers {
    flex: 1;
    border-collapse: separate;
    border-spacing: 0;
    table-layout: fixed;
}

.layers th,
.layers td {
    height: 21px;
    padding: 0;
    border: solid #c2c5cb;
    border-width: 0 1px 1px 0;
}

.layers th {
    font-weight: normal;
    background: #f0f0f0;
    color: #333;
}

.layers .check {
    width: 63px;
}

.layers td:not(:first-child) {
    text-align: center;
    line-height: 0;
}

.tree {
    display: flex;
    align-items: center;
    height: 20px;
    background: linear-gradient(#c2c5cb, #c2c5cb) 7px 0 / 1px 100% no-repeat;
}

.tree.level-0 {
    background-position-y: 17px;
}

.tree .toggle {
    width: 14px;
    height: 14px;
    border: 1px solid #999;
    border-radius: 2px;
    background: linear-gradient(#222, #222) 50% 50% / 8px 1px no-repeat #f0f0f0;
}

.tree label {
    margin-left: 6px;
}

.level-0 {
    padding-left: 1px;
}

.level-1 {
    padding-left: 11px;
}

.level-2 {
    padding-left: 18px;
}

.level-2 label {
    margin-left: 5px;
}

.stub {
    width: 18px;
    height: 20px;
    background:
        linear-gradient(#c2c5cb, #c2c5cb) 0 0 / 1px 100% no-repeat,
        linear-gradient(#c2c5cb, #c2c5cb) 0 50% / 18px 1px no-repeat;
}

.stub.last {
    background-size: 1px 50%, 18px 1px;
}

.layers input {
    appearance: none;
    width: 14px;
    height: 14px;
    margin: 0;
    border: 1px solid #888;
    border-radius: 2px;
    background: #fff;
    vertical-align: middle;
}

.layers input:checked {
    border-color: #4f9ffa;
    background: #4f9ffa;
}

.layers input:checked::after {
    content: "";
    display: block;
    width: 4px;
    height: 7px;
    margin: 1px 4px;
    border: solid #fff;
    border-width: 0 2px 2px 0;
    transform: rotate(42deg);
}

.layers input:indeterminate {
    background: #9cc6fb;
    box-shadow: inset 0 0 0 1px #fff;
    border-color: #5d7fa8;
}

.layers input:disabled {
    border-color: #aaa;
    background: #f0f0f0;
}

.scroll {
    display: flex;
    flex-direction: column;
    align-items: center;
    width: 15px;
    padding: 3px 0;
}

.scroll i {
    border: 4px solid transparent;
}

.scroll .up {
    border-top: 0;
    border-bottom-color: #222;
}

.scroll .down {
    border-bottom: 0;
    border-top-color: #222;
}

.scroll span {
    width: 8px;
    height: 34%;
    margin: 2px 0 auto;
    border-radius: 4px;
    background: #c9c9c9;
}

.display-foot {
    display: flex;
    justify-content: flex-end;
    padding: 6px 8px 0;
}

.display-foot button {
    width: 90px;
    height: 26px;
    border: 1px solid #b9c4d4;
    border-radius: 3px;
    background: #fbfbfb;
    color: #333;
}

/* status bar */
.status {
    position: relative;
    display: flex;
    align-items: center;
    height: 30px;
    padding: 1px 8px 0 2px;
    background: #dcdcde;
    border-bottom: 1px solid #fff;
    color: #333;
    white-space: nowrap;
}

.coords {
    width: 203px;
}

.height {
    width: 83px;
}

.level {
    width: 133px;
}

.count {
    width: 103px;
}

.hidden-count {
    width: 80px;
}

.modes {
    display: flex;
    gap: 3px;
}

.modes button {
    display: flex;
    align-items: center;
    justify-content: center;
    gap: 5px;
    height: 25px;
    padding: 0 4px;
    border: 1px solid #9a9a9a;
    background: #cfcfd1;
}

.modes button svg {
    width: 15px;
    height: 16px;
}

.modes .on {
    border-color: #3f96f0;
    background: #fff;
}

.modes button:nth-child(3) {
    border-color: #b0b0b0;
}

.hint {
    margin-left: 6px;
}

.fps {
    margin-left: auto;
}

.ball {
    position: absolute;
    top: -20px;
    right: -28px;
    width: 48px;
    height: 48px;
    padding-left: 4px;
    border: 2px solid #e8f0ea;
    border-radius: 50%;
    background: linear-gradient(#7fdf94, #3cb55c 55%, #2fc44f);
    box-shadow: inset 0 0 0 1px #2c7d49, 0 1px 3px #777;
    color: #fff;
    font-weight: bold;
    line-height: 44px;
}

.taskbar {
    display: flex;
    gap: 2px;
    height: 8px;
    overflow: hidden;
    border-top: 1px solid #14304d;
    background: linear-gradient(90deg, #2a6f9e, #1c5b93 50%, #123f70);
}

.orb {
    width: 28px;
    height: 28px;
    margin: 2px 30px 0 12px;
    flex: none;
    border-radius: 50%;
    background: #b9cbd6;
}

.pin {
    width: 18px;
    height: 18px;
    margin: 3px 26px 0 0;
    flex: none;
    border-radius: 50%;
}

.pin.green {
    background: #b4cc3c;
    margin-right: 42px;
}

.pin.blue {
    background: #3a9be0;
}

.task {
    width: 160px;
    height: 40px;
    flex: none;
    border: 1px solid #cde0ea;
    border-radius: 2px;
    background: linear-gradient(90deg, #8fb5c9, #4e87a8);
}

.task.light {
    background: linear-gradient(90deg, #dfe8ed, #9ebccd);
}
```

FILE: script.js
```js
const categories = ["常用构件类型", "轴线", "柱", "墙", "门窗洞", "梁", "板", "楼梯", "装修", "土方"];
const foundation = ["基础梁(F)", "筏板基础(M)", "筏板主筋(R)", "筏板负筋(X)", "基础板带(W)", "集水坑(K)", "柱墩(Y)", "独立基础(D)", "条形基础(T)", "桩承台(V)", "桩(U)", "垫层(X)", "地沟(G)", "砖胎膜"];

const layers = [
    ["轴线", ["轴网", "辅助轴线"]],
    ["柱", ["柱", "构造柱", "砌体柱"]],
    ["墙", ["剪力墙", "人防门框墙", "砌体墙", "砌体加筋", "保温墙", "暗梁", "墙垛", "幕墙"]],
    ["门窗洞", ["门", "窗", "门联窗", "墙洞", "带形窗", "带形洞", "飘窗", "老虎窗", "过梁", "壁龛"]],
    ["梁", ["梁", "连梁", "圈梁"]],
    ["板", ["现浇板"]]
];

// axis bubbles: text, x, y
const bubbles = [
    ["1", 686.5, 224], ["2", 788.5, 224], ["3", 890.5, 224], ["E", 901.5, 224], ["4", 946.5, 224],
    ["D", 1013.5, 204], ["C", 1042.5, 199], ["B", 1142.5, 181], ["A", 1161, 181],
    ["J", 620, 290.5], ["H", 620, 413.5], ["G", 620, 517.5], ["F", 620, 610.5], ["E", 620, 636.5],
    ["D", 620, 750.5], ["C", 620, 779.5], ["B", 620, 881.5], ["A", 620, 899.5],
    ["1", 686.5, 966], ["2", 788.5, 966], ["3", 890.5, 966], ["4", 946.5, 966], ["5", 1047.5, 966],
    ["1/5", 1061.5, 966], ["1/5", 1075.5, 950.5],
    ["13", 1238, 230.5], ["10", 1277, 446.5], ["9", 1296, 546.5], ["8", 1314, 646], ["1/08", 1317, 659],
    ["1/5", 1304, 675.5], ["7", 1305.5, 837], ["6", 1234, 923]
];

// dimension texts: text, x, y, angle
const labels = [
    ["8400", 737, 263, 0], ["8400", 839, 263, 0], ["4590", 918.5, 263, 0],
    ["8400", 737, 927, 0], ["8400", 839, 927, 0], ["4590", 918.5, 927, 0], ["8400", 997, 927, 0], ["1126", 1055, 927, 0],
    ["30916", 874, 945, 0],
    ["10166", 659, 352, -90], ["10166", 667, 352, -90], ["8544", 659, 465, -90], ["7690", 659, 563, -90], ["7690", 667, 563, -90],
    ["50200", 641, 594, -90], ["2100", 659, 623, -90], ["9400", 659, 693, -90], ["2400", 659, 765, -90], ["8400", 659, 830, -90], ["1500", 659, 890, -90],
    ["21700", 1035.5, 222, -10], ["2400", 1035.5, 240.5, -10], ["9400", 964.5, 253, -10], ["4010", 998.5, 254.5, -10], ["8400", 1099.5, 228.5, -10], ["1500", 1158.5, 218, -10],
    ["18062", 1219, 345.5, 80], ["35975", 1256, 449, 80], ["8400", 1247.5, 503.5, 80], ["8384", 1266.5, 603, 80], ["1129", 1276, 660.5, 80],
    ["2450", 911.5, 395, 80], ["4645", 1288, 785, -51]
];

function icon(name) {
    return `<svg><use href="#${name}" /></svg>`;
}

function showCategories() {
    const list = document.querySelector(".category-list");
    const folder = name => `<li><button>${icon("i-folder")}${name}</button></li>`;
    let html = categories.map(folder).join("");
    html += `<li><button>${icon("i-folderopen")}基础</button></li>`;
    foundation.forEach((name, i) => {
        html += `<li class="child"><button class="${i == 2 ? "selected" : ""}">${icon("i-f" + (i + 1))}${name}</button></li>`;
    });
    html += ["其它", "自定义"].map(folder).join("");
    list.innerHTML = html;
}

function layerRow(name, level, last, on) {
    const id = "layer" + document.querySelectorAll(".layers tbody tr").length;
    const lead = level == 2 ? `<span class="stub ${last ? "last" : ""}"></span>` : `<button class="toggle" aria-label="折叠"></button>`;
    const row = document.createElement("tr");
    row.innerHTML = `<td><div class="tree level-${level}">${lead}<label for="${id}">${name}</label></div></td>
        <td><input type="checkbox" id="${id}" ${on ? "checked" : ""}></td>
        <td><input type="checkbox" aria-label="${name} 显示名称" ${on ? "disabled" : ""}></td>`;
    document.querySelector(".layers tbody").appendChild(row);
    return row;
}

function showLayers() {
    layerRow("所有构件", 0).querySelector("input").indeterminate = true;
    layers.forEach(([group, children], g) => {
        const on = g == 0;
        layerRow(group, 1, false, on);
        children.forEach((name, i) => {
            layerRow(name, 2, i == children.length - 1 && group != "板", on);
        });
    });
}

function showDrawing() {
    document.querySelector(".bubbles").innerHTML = bubbles.map(([t, x, y]) => `<circle cx="${x}" cy="${y}" r="12" />`).join("");
    const all = bubbles.map(([t, x, y]) => [t, x, y, 0]).concat(labels);
    document.querySelector(".labels").innerHTML = all.map(([t, x, y, a]) => `<text transform="translate(${x} ${y}) rotate(${a})" y="6">${t}</text>`).join("");
}

showCategories();
showLayers();
showDrawing();
```
